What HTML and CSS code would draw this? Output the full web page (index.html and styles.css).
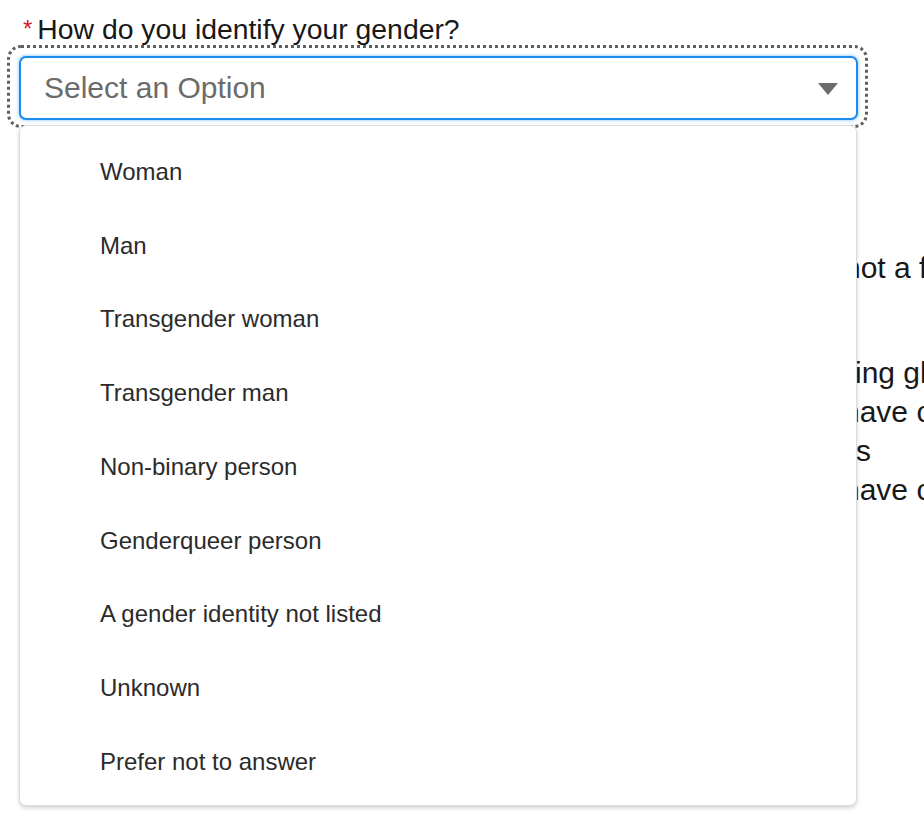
FILE: index.html
```html
<!DOCTYPE html>
<html lang="en">
<head>
<meta charset="utf-8">
<title>Gender question</title>
<link rel="stylesheet" href="styles.css">
</head>
<body>
<div class="page">
  <div class="field">
    <label class="label"><abbr class="req" title="required">*</abbr>How do you identify your gender?</label>
    <div class="focus-ring">
      <div class="select">
        <span class="placeholder">Select an Option</span>
        <span class="caret"></span>
      </div>
      <ul class="listbox">
        <li class="option">Woman</li>
        <li class="option">Man</li>
        <li class="option">Transgender woman</li>
        <li class="option">Transgender man</li>
        <li class="option">Non-binary person</li>
        <li class="option">Genderqueer person</li>
        <li class="option">A gender identity not listed</li>
        <li class="option">Unknown</li>
        <li class="option">Prefer not to answer</li>
      </ul>
    </div>
  </div>
  <div class="behind">
    <p class="para first"><span class="line l1">not a fixed</span></p>
    <p class="para second">
      <span class="line l2">ing glands</span>
      <span class="line l3">have changed</span>
      <span class="line l4">s</span>
      <span class="line l5">have changed</span>
    </p>
  </div>
</div>
</body>
</html>
```
FILE: styles.css
```css
html, body {
  margin: 0;
  padding: 0;
  background: #ffffff;
}
body {
  font-family: "Liberation Sans", Arial, Helvetica, sans-serif;
  color: #181818;
  overflow: hidden;
  width: 924px;
  height: 826px;
}
.page {
  position: relative;
  width: 924px;
  height: 826px;
  overflow: hidden;
}
.field {
  position: relative;
  z-index: 2;
  padding-top: 13px;
}
.label {
  display: block;
  font-size: 28.35px;
  line-height: 32px;
  height: 32px;
  padding-left: 23px;
  color: #181818;
  white-space: nowrap;
}
.req {
  color: #d0202a;
  text-decoration: none;
  border: 0;
  font-size: 24px;
  vertical-align: 2px;
  margin-right: 5px;
}
.focus-ring {
  position: relative;
  margin: 0 0 0 7px;
  width: 861px;
  box-sizing: border-box;
  border: 3px dotted #5f5f5f;
  border-radius: 14px;
  padding: 8px 7px 5px 9px;
}
.select {
  height: 64px;
  box-sizing: border-box;
  border: 2px solid #1b8cee;
  border-radius: 7px;
  box-shadow: 0 0 3px 1px rgba(27, 140, 238, 0.35);
  background: #ffffff;
  display: flex;
  align-items: center;
  justify-content: space-between;
  padding: 0 18px 0 23px;
}
.placeholder {
  font-size: 30px;
  color: #6b6b6b;
  line-height: 34px;
}
.caret {
  width: 0;
  height: 0;
  border-left: 10px solid transparent;
  border-right: 10px solid transparent;
  border-top: 12px solid #6b6b6b;
  margin-top: 2px;
}
.listbox {
  position: absolute;
  top: 77px;
  left: 9px;
  width: 838px;
  box-sizing: border-box;
  margin: 0;
  padding: 9px 0 6px 0;
  list-style: none;
  background: #ffffff;
  border: 1px solid #dcdcdc;
  border-radius: 7px;
  box-shadow: 0 2px 4px rgba(0, 0, 0, 0.18);
}
.option {
  height: 73.75px;
  display: flex;
  align-items: center;
  padding-left: 80px;
  font-size: 24px;
  color: #2b2b2b;
}
.behind {
  position: relative;
  z-index: 1;
  font-size: 30px;
  line-height: 39px;
  color: #181818;
  white-space: nowrap;
}
.para {
  margin: 0;
  display: flex;
  flex-direction: column;
}
.para.first {
  margin-top: 120px;
}
.para.second {
  margin-top: 66px;
}
.line {
  display: block;
}
.l1 { padding-left: 844px; }
.l2 { padding-left: 855px; }
.l3 { padding-left: 843px; }
.l4 { padding-left: 856px; }
.l5 { padding-left: 843px; }
```
